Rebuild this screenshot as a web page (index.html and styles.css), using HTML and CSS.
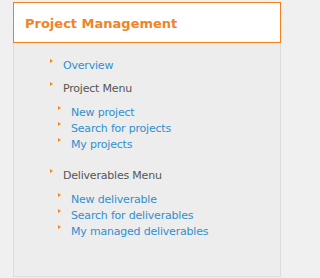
FILE: index.html
```html
<!DOCTYPE html>
<html>
<head>
<meta charset="utf-8">
<link rel="stylesheet" href="styles.css">
</head>
<body>
<div class="box">
  <div class="box-header"><h2 class="title">Project Management</h2></div>
  <div class="box-body">
    <ul class="menu">
      <li class="item"><a class="link" href="#">Overview</a></li>
      <li class="item group">
        <span class="label">Project Menu</span>
        <ul class="submenu">
          <li class="item"><a class="link" href="#">New project</a></li>
          <li class="item"><a class="link" href="#">Search for projects</a></li>
          <li class="item"><a class="link" href="#">My projects</a></li>
        </ul>
      </li>
      <li class="item group">
        <span class="label">Deliverables Menu</span>
        <ul class="submenu">
          <li class="item"><a class="link" href="#">New deliverable</a></li>
          <li class="item"><a class="link" href="#">Search for deliverables</a></li>
          <li class="item"><a class="link" href="#">My managed deliverables</a></li>
        </ul>
      </li>
    </ul>
  </div>
</div>
</body>
</html>
```
FILE: styles.css
```css
html, body {
  margin: 0;
  padding: 0;
  background: #f0f0f0;
  font-family: "DejaVu Sans", Verdana, sans-serif;
}
.box {
  margin: 2px 0 0 13px;
  width: 268px;
}
.box-header {
  box-sizing: border-box;
  height: 41px;
  border: 1px solid #f07f1e;
  background: #ffffff;
  padding: 0 0 0 11px;
  display: flex;
  align-items: center;
}
.title {
  margin: 0;
  font-size: 13px;
  font-weight: bold;
  color: #ef8429;
  line-height: 16px;
  position: relative;
  top: 1px;
}
.box-body {
  box-sizing: border-box;
  height: 234px;
  border: 1px solid #dcdcdc;
  border-top: none;
  background: #ededed;
  padding: 15px 0 0 36px;
}
.menu, .submenu {
  list-style: none;
  margin: 0;
  padding: 0;
}
.item {
  position: relative;
  padding-left: 13px;
  font-size: 11px;
  line-height: 16px;
  letter-spacing: -0.2px;
}
.item::before {
  content: "";
  position: absolute;
  left: 0;
  top: 1px;
  width: 0;
  height: 0;
  border-top: 2.5px solid transparent;
  border-bottom: 2.5px solid transparent;
  border-left: 3px solid #f08a10;
}
.menu > .item + .item {
  margin-top: 7px;
}
.menu > .group + .group {
  margin-top: 15px;
}
.submenu {
  margin: 8px 0 0 -5px;
}
.link {
  color: #2f90cf;
  text-decoration: none;
}
.label {
  color: #555555;
}
```
